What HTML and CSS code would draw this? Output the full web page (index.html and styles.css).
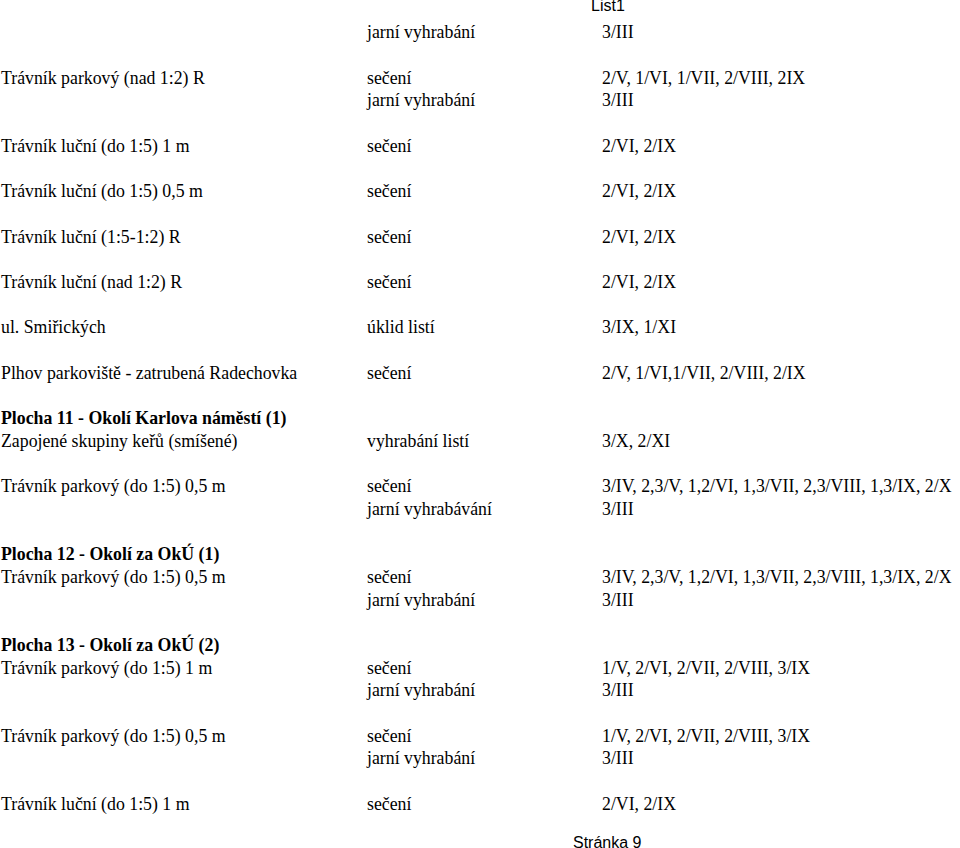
FILE: index.html
```html
<!DOCTYPE html>
<html lang="cs">
<head>
<meta charset="utf-8">
<title>List1</title>
<link rel="stylesheet" href="styles.css">
</head>
<body>
<div class="page">
  <div class="header"><span>List1</span></div>
  <div class="sheet">
    <div class="row"><span></span><span>jarní vyhrabání</span><span>3/III</span></div>
    <div class="row blank"></div>
    <div class="row"><span>Trávník parkový (nad 1:2) R</span><span>sečení</span><span>2/V, 1/VI, 1/VII, 2/VIII, 2IX</span></div>
    <div class="row"><span></span><span>jarní vyhrabání</span><span>3/III</span></div>
    <div class="row blank"></div>
    <div class="row"><span>Trávník luční (do 1:5) 1 m</span><span>sečení</span><span>2/VI, 2/IX</span></div>
    <div class="row blank"></div>
    <div class="row"><span>Trávník luční (do 1:5) 0,5 m</span><span>sečení</span><span>2/VI, 2/IX</span></div>
    <div class="row blank"></div>
    <div class="row"><span>Trávník luční (1:5-1:2) R</span><span>sečení</span><span>2/VI, 2/IX</span></div>
    <div class="row blank"></div>
    <div class="row"><span>Trávník luční (nad 1:2) R</span><span>sečení</span><span>2/VI, 2/IX</span></div>
    <div class="row blank"></div>
    <div class="row"><span>ul. Smiřických</span><span>úklid listí</span><span>3/IX, 1/XI</span></div>
    <div class="row blank"></div>
    <div class="row"><span>Plhov parkoviště - zatrubená Radechovka</span><span>sečení</span><span>2/V, 1/VI,1/VII, 2/VIII, 2/IX</span></div>
    <div class="row blank"></div>
    <div class="row heading"><span>Plocha 11 - Okolí Karlova náměstí (1)</span><span></span><span></span></div>
    <div class="row"><span>Zapojené skupiny keřů (smíšené)</span><span>vyhrabání listí</span><span>3/X, 2/XI</span></div>
    <div class="row blank"></div>
    <div class="row"><span>Trávník parkový (do 1:5) 0,5 m</span><span>sečení</span><span>3/IV, 2,3/V, 1,2/VI, 1,3/VII, 2,3/VIII, 1,3/IX, 2/X</span></div>
    <div class="row"><span></span><span>jarní vyhrabávání</span><span>3/III</span></div>
    <div class="row blank"></div>
    <div class="row heading"><span>Plocha 12 - Okolí za OkÚ (1)</span><span></span><span></span></div>
    <div class="row"><span>Trávník parkový (do 1:5) 0,5 m</span><span>sečení</span><span>3/IV, 2,3/V, 1,2/VI, 1,3/VII, 2,3/VIII, 1,3/IX, 2/X</span></div>
    <div class="row"><span></span><span>jarní vyhrabání</span><span>3/III</span></div>
    <div class="row blank"></div>
    <div class="row heading"><span>Plocha 13 - Okolí za OkÚ (2)</span><span></span><span></span></div>
    <div class="row"><span>Trávník parkový (do 1:5) 1 m</span><span>sečení</span><span>1/V, 2/VI, 2/VII, 2/VIII, 3/IX</span></div>
    <div class="row"><span></span><span>jarní vyhrabání</span><span>3/III</span></div>
    <div class="row blank"></div>
    <div class="row"><span>Trávník parkový (do 1:5) 0,5 m</span><span>sečení</span><span>1/V, 2/VI, 2/VII, 2/VIII, 3/IX</span></div>
    <div class="row"><span></span><span>jarní vyhrabání</span><span>3/III</span></div>
    <div class="row blank"></div>
    <div class="row"><span>Trávník luční (do 1:5) 1 m</span><span>sečení</span><span>2/VI, 2/IX</span></div>
  </div>
  <div class="footer"><span>Stránka 9</span></div>
</div>
</body>
</html>
```
FILE: styles.css
```css
html, body {
  margin: 0;
  padding: 0;
  background: #ffffff;
  overflow: hidden;
}
body {
  width: 960px;
  height: 848px;
  color: #000000;
}
.page {
  width: 960px;
  height: 848px;
  overflow: hidden;
}
.header {
  height: 23.4px;
  padding-left: 591px;
  font-family: "Liberation Sans", Arial, sans-serif;
  font-size: 16px;
  line-height: 16px;
}
.header span {
  display: block;
  margin-top: -2px;
}
.sheet {
  font-family: "Liberation Serif", "Times New Roman", serif;
  font-size: 17.8px;
}
.row {
  display: grid;
  grid-template-columns: 367px 235px 1fr;
  height: 22.7px;
  line-height: 22.7px;
  white-space: nowrap;
}
.row span:first-child {
  padding-left: 1px;
}
.heading {
  font-weight: bold;
}
.footer {
  padding-left: 573px;
  padding-top: 19px;
  font-family: "Liberation Sans", Arial, sans-serif;
  font-size: 16px;
  line-height: 18px;
}
```
